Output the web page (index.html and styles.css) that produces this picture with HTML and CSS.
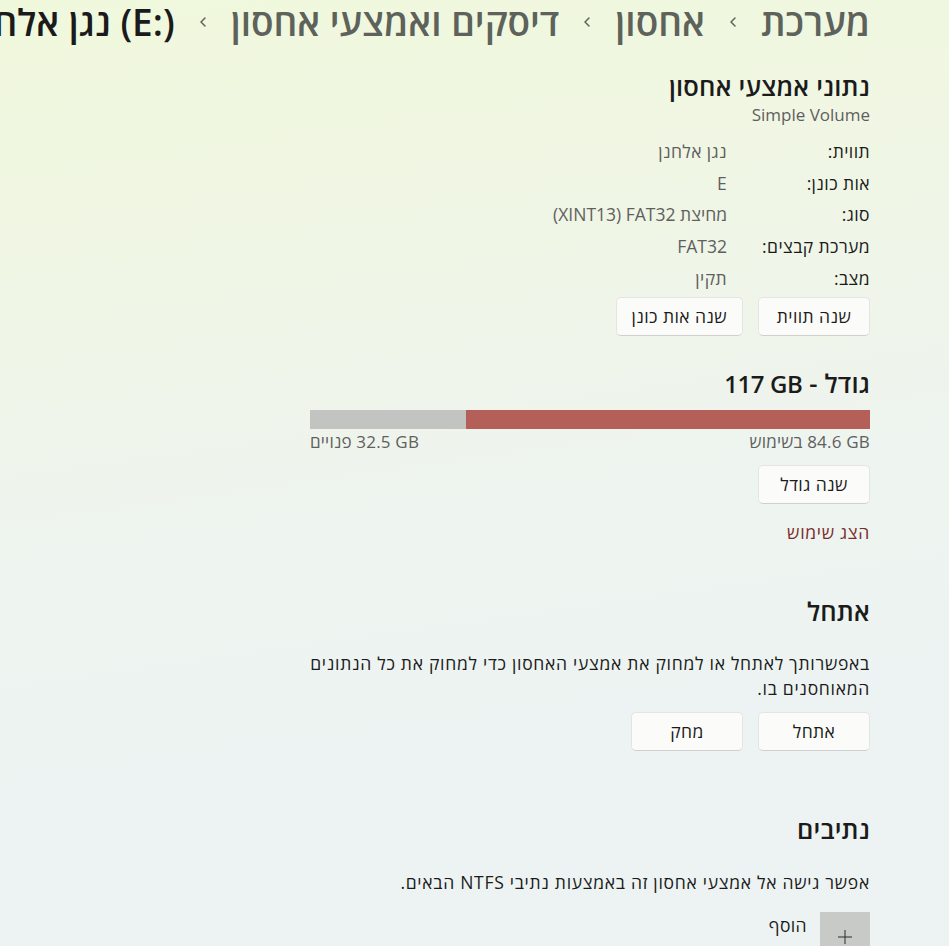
FILE: index.html
```html
<!DOCTYPE html>
<html lang="he" dir="rtl">
<head>
<meta charset="utf-8">
<title>נגן אלחנן (E:)</title>
<link rel="stylesheet" href="styles.css">
</head>
<body>
<div class="page">
  <header class="crumbs">
    <span class="crumb">מערכת</span>
    <span class="chev"><svg viewBox="0 0 10 14" width="10" height="14"><path d="M7 3 L3 7 L7 11" fill="none" stroke="currentColor" stroke-width="1.5" stroke-linecap="round" stroke-linejoin="round"/></svg></span>
    <span class="crumb">אחסון</span>
    <span class="chev"><svg viewBox="0 0 10 14" width="10" height="14"><path d="M7 3 L3 7 L7 11" fill="none" stroke="currentColor" stroke-width="1.5" stroke-linecap="round" stroke-linejoin="round"/></svg></span>
    <span class="crumb">דיסקים ואמצעי אחסון</span>
    <span class="chev"><svg viewBox="0 0 10 14" width="10" height="14"><path d="M7 3 L3 7 L7 11" fill="none" stroke="currentColor" stroke-width="1.5" stroke-linecap="round" stroke-linejoin="round"/></svg></span>
    <span class="crumb current"><bdi dir="ltr">(E:)</bdi> נגן אלחנן</span>
  </header>

  <main class="content">
    <section class="sec sec-info">
      <h2 class="sec-title">נתוני אמצעי אחסון</h2>
      <div class="subtitle">Simple Volume</div>
      <div class="rows">
        <div class="row"><span class="lbl">תווית:</span><span class="val">נגן אלחנן</span></div>
        <div class="row"><span class="lbl">אות כונן:</span><span class="val">E</span></div>
        <div class="row"><span class="lbl">סוג:</span><span class="val"><span class="latin" dir="ltr">(XINT13) FAT32 מחיצת</span></span></div>
        <div class="row"><span class="lbl">מערכת קבצים:</span><span class="val latin">FAT32</span></div>
        <div class="row"><span class="lbl">מצב:</span><span class="val">תקין</span></div>
      </div>
      <div class="btns btns-info">
        <button class="btn">שנה תווית</button>
        <button class="btn">שנה אות כונן</button>
      </div>
    </section>

    <section class="sec sec-size">
      <h2 class="sec-title">גודל - <bdi class="num" dir="ltr">117 GB</bdi></h2>
      <div class="bar">
        <div class="used" style="width: 72.1%"></div>
        <div class="free"></div>
      </div>
      <div class="bar-labels">
        <span><bdi dir="ltr">84.6 GB</bdi> בשימוש</span>
        <span><bdi dir="ltr">32.5 GB</bdi> פנויים</span>
      </div>
      <div class="btns btns-size">
        <button class="btn">שנה גודל</button>
      </div>
      <a class="link" href="#">הצג שימוש</a>
    </section>

    <section class="sec sec-format">
      <h2 class="sec-title">אתחל</h2>
      <p class="para">באפשרותך לאתחל או למחוק את אמצעי האחסון כדי למחוק את כל הנתונים המאוחסנים בו.</p>
      <div class="btns btns-format">
        <button class="btn">אתחל</button>
        <button class="btn">מחק</button>
      </div>
    </section>

    <section class="sec sec-paths">
      <h2 class="sec-title">נתיבים</h2>
      <p class="para para-paths">אפשר גישה אל אמצעי אחסון זה באמצעות נתיבי NTFS הבאים.</p>
      <div class="add">
        <button class="add-btn" aria-label="הוסף"><svg viewBox="0 0 16 16" width="16" height="16"><path d="M8 1 V15 M1 8 H15" stroke="#2b2b2b" stroke-width="1" fill="none"/></svg></button>
        <span class="add-lbl">הוסף</span>
      </div>
    </section>
  </main>
</div>
</body>
</html>
```

FILE: styles.css
```css
html, body {
  margin: 0;
  padding: 0;
}

body {
  direction: rtl;
  font-family: "Open Sans", "Liberation Sans", "DejaVu Sans", sans-serif;
  color: #1b1b1b;
  letter-spacing: 0.4px;
  background: linear-gradient(172deg, #f0f8dc 0%, #f0f6e4 25%, #eef4ee 50%, #edf3f2 75%, #edf3f3 100%);
  height: 946px;
  overflow: hidden;
}

.page {
  height: 946px;
  overflow: hidden;
}

.crumbs {
  display: flex;
  align-items: center;
  white-space: nowrap;
  overflow-x: clip;
  overflow-y: visible;
  height: 44px;
  padding-right: 79px;
  font-size: 37px;
  font-weight: 600;
  letter-spacing: 0;
  color: #5d625b;
}

.crumb {
  flex: none;
  line-height: 44px;
}

.crumb.current {
  color: #1b1b1b;
}

.chev {
  flex: none;
  display: flex;
  align-items: center;
  margin: 0 23px;
  color: #5d625b;
}

.content {
  width: 560px;
  margin-right: 79px;
}

.sec-title {
  margin: 0;
  height: 30px;
  font-size: 25.5px;
  font-weight: 600;
  line-height: 30px;
  letter-spacing: 0.2px;
}

.sec-title .num {
  font-size: 24px;
  line-height: 20px;
  letter-spacing: -0.4px;
}

.sec-info .sec-title { margin-top: 27px; }

.subtitle {
  margin-top: 3px;
  font-size: 17px;
  line-height: 22px;
  letter-spacing: 0;
  color: #5f5f5f;
}

.rows {
  margin-top: 9px;
}

.row {
  display: flex;
  height: 31.75px;
  align-items: center;
  font-size: 17.5px;
}

.lbl {
  width: 143px;
  flex: none;
}

.val {
  color: #5f5f5f;
}

.latin {
  letter-spacing: 0;
}

.btns {
  display: flex;
  gap: 15px;
}

.btns-info { margin-top: 3px; }

.btn {
  font-family: inherit;
  font-size: 17.5px;
  letter-spacing: 0.4px;
  color: #1b1b1b;
  height: 39px;
  min-width: 112px;
  padding: 0 15px;
  background: #fbfbfa;
  border: 1px solid #e4e5e2;
  border-bottom-color: #cfd0cd;
  border-radius: 5px;
}

.sec-size .sec-title { margin-top: 32px; }

.bar {
  display: flex;
  margin-top: 12px;
  height: 19px;
}

.used {
  background: #b45f58;
}

.free {
  flex: 1;
  background: #c1c4c0;
}

.bar-labels {
  display: flex;
  justify-content: space-between;
  margin-top: 2px;
  font-size: 17px;
  line-height: 22px;
  letter-spacing: 0.2px;
  color: #5f5f5f;
}

.btns-size { margin-top: 12px; }

.link {
  display: block;
  margin-top: 17px;
  font-size: 17.5px;
  line-height: 22px;
  letter-spacing: 0.7px;
  color: #7b2b29;
  text-decoration: none;
}

.sec-format .sec-title { margin-top: 53px; }

.para {
  margin: 25px 0 0;
  font-size: 17.5px;
  line-height: 25px;
  letter-spacing: 0.72px;
}

.btns-format { margin-top: 11px; }

.sec-paths .sec-title { margin-top: 63px; }

.para-paths { margin-top: 26px; }

.add {
  display: flex;
  align-items: flex-start;
  gap: 13px;
  margin-top: 17px;
}

.add-btn {
  width: 50px;
  height: 50px;
  padding: 0;
  border: none;
  background: #c8cac8;
  display: flex;
  align-items: center;
  justify-content: center;
}

.add-lbl {
  font-size: 17.5px;
  line-height: 26px;
}
```
